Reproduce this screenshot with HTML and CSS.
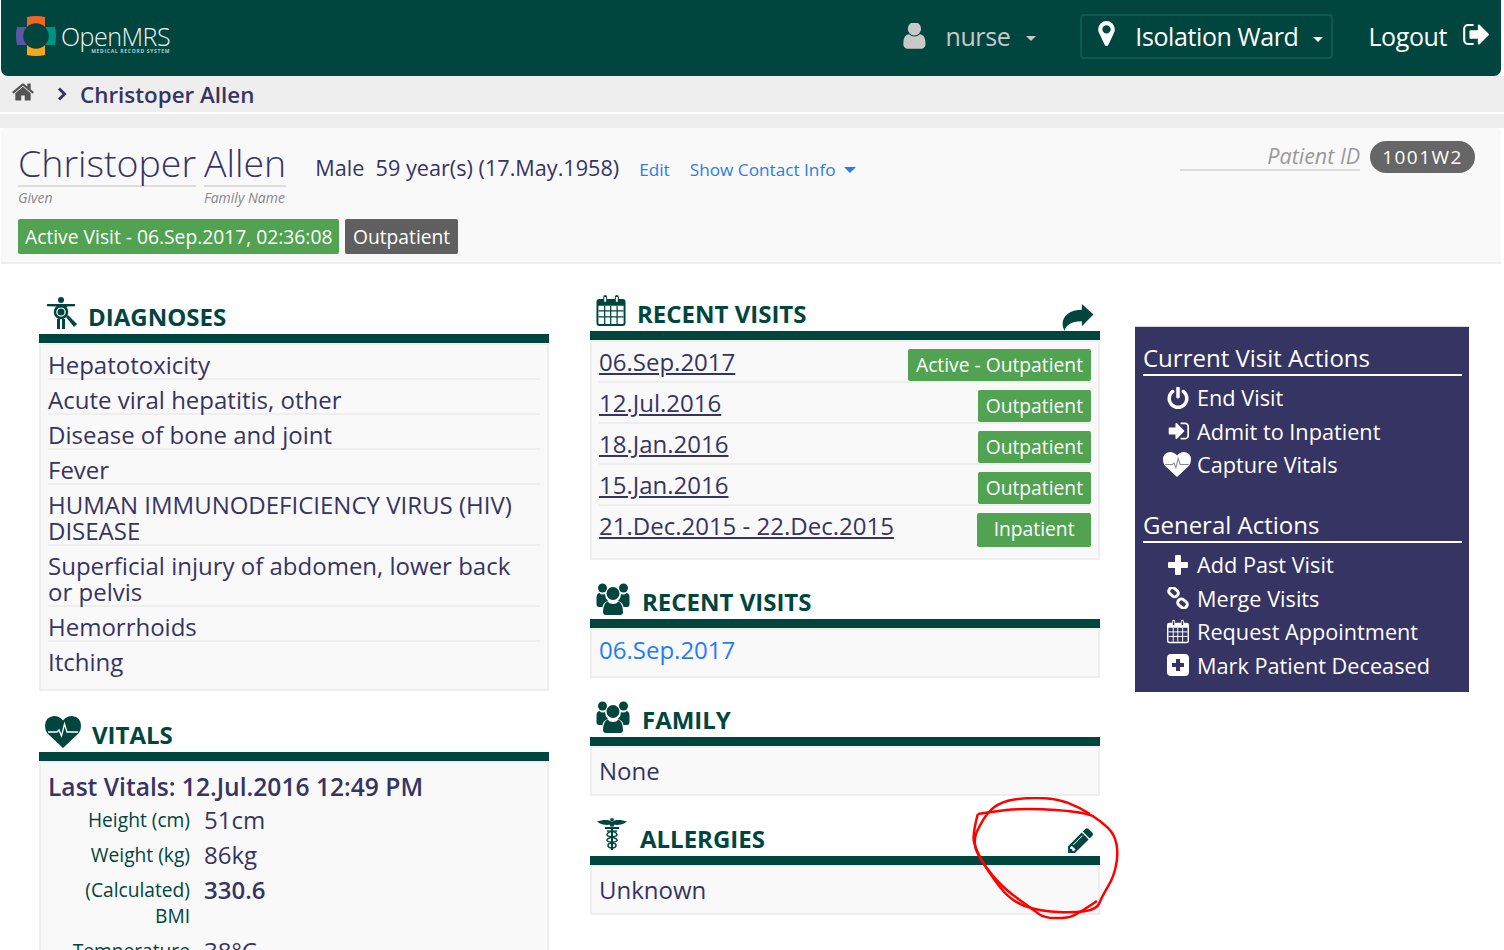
FILE: index.html
```html
<!DOCTYPE html>
<html lang="en">
<head>
<meta charset="UTF-8">
<meta name="viewport" content="width=device-width, initial-scale=1.0">
<title>OpenMRS - Christoper Allen</title>
<link rel="stylesheet" href="styles.css">
</head>
<body>
    <svg class="icon-defs" aria-hidden="true">
        <symbol id="i-calendar" viewBox="0 0 30 32">
            <path fill-rule="evenodd" d="M3 4h4V2a2 2 0 0 1 4 0v2h8V2a2 2 0 0 1 4 0v2h4a3 3 0 0 1 3 3v22a3 3 0 0 1-3 3H3a3 3 0 0 1-3-3V7a3 3 0 0 1 3-3zM2 11v18q0 1 1 1h24q1 0 1-1V11zM8 2v5h2V2zM20 2v5h2V2z"/>
            <path d="M8.500 11v19M14.700 11v19M21.300 11v19M2 16.500h26M2 22.700h26" fill="none" stroke="currentColor" stroke-width="1.300"/>
        </symbol>
        <symbol id="i-users" viewBox="0 0 34 32">
            <circle cx="6.500" cy="5" r="4.500"/>
            <circle cx="27.500" cy="5" r="4.500"/>
            <circle cx="17" cy="10.500" r="6.500"/>
            <path d="M.5 14.500q0-4 3-4.500 1 1.500 3.500 1.500 1 0 2-.5 0 4 3 7-5 1.500-5.500 6H3q-2.500 0-2.500-3zM33.500 14.500q0-4-3-4.500-1 1.500-3.500 1.500-1 0-2-.5 0 4-3 7 5 1.500 5.500 6H31q2.500 0 2.500-3zM7 29q0-8 4.500-10.500 2 2.500 5.500 2.500t5.500-2.500Q27 21 27 29q0 3-3 3H10q-3 0-3-3z"/>
        </symbol>
        <symbol id="i-heart" viewBox="0 0 36 32">
            <path d="M18 32 2.500 17.500Q0 14.500 0 10 0 1 9 0q5.500 0 9 4.500Q21.500 0 27 0q9 1 9 10 0 4.500-2.500 7.500z"/>
            <path d="M3 16h9l2-2 2.500 6 3-12 2.500 8h11" fill="none" stroke="var(--pulse)" stroke-width="1.300"/>
        </symbol>
        <symbol id="i-home" viewBox="0 0 1792 1792">
            <path d="M1472 992v480q0 26-19 45t-45 19h-384v-384h-256v384h-384q-26 0-45-19t-19-45v-480q0-1 .5-3t.5-3l575-474 575 474q1 2 1 6zm223-69l-62 74q-8 9-21 11h-3q-13 0-21-7l-692-577-692 577q-12 8-24 7-13-2-21-11l-62-74q-8-10-7-23.500t11-21.500l719-599q32-26 76-26t76 26l244 204v-195q0-14 9-23t23-9h192q14 0 23 9t9 23v408l219 182q10 8 11 21.500t-7 23.500z"/>
        </symbol>
    </svg>

    <div class="topbar">
        <div class="logo">
            <svg class="logo-mark" viewBox="0 0 40 40">
                <path d="M11 1q9-2 18 0v10a12.700 12.700 0 0 0-18 0z" fill="#f26522"/>
                <path d="M11 1q9-2 18 0v10a12.700 12.700 0 0 0-18 0z" fill="#009384" transform="rotate(90 20 20)"/>
                <path d="M11 1q9-2 18 0v10a12.700 12.700 0 0 0-18 0z" fill="#f8a91b" transform="rotate(180 20 20)"/>
                <path d="M11 1q9-2 18 0v10a12.700 12.700 0 0 0-18 0z" fill="#5b57a6" transform="rotate(270 20 20)"/>
            </svg>
            <div class="logo-text">
                <span class="logo-name">OpenMRS</span>
                <span class="logo-sub">MEDICAL RECORD SYSTEM</span>
            </div>
        </div>
        <div class="nav-user">
            <svg class="nav-icon" viewBox="290 180 1280 1500"><path d="M1536 1399q0 109-62.500 187t-150.500 78h-854q-88 0-150.500-78t-62.500-187q0-85 8.500-160.500t31.500-152 58.500-131 94-89 134.500-34.500q131 128 313 128t313-128q76 0 134.500 34.500t94 89 58.500 131 31.500 152 8.500 160.500zm-256-887q0 159-112.500 271.500t-271.500 112.500-271.500-112.500-112.500-271.500 112.500-271.500 271.500-112.500 271.500 112.500 112.500 271.500z"/></svg>
            <span class="nav-label">nurse</span>
            <span class="caret"></span>
        </div>
        <div class="nav-location">
            <svg class="nav-pin" viewBox="384 128 1024 1536"><path d="M1152 640q0-106-75-181t-181-75-181 75-75 181 75 181 181 75 181-75 75-181zm256 0q0 109-33 179l-364 774q-16 33-47.500 52t-67.500 19-67.500-19-46.500-52l-365-774q-33-70-33-179 0-212 150-362t362-150 362 150 150 362z"/></svg>
            <span class="nav-label">Isolation Ward</span>
            <span class="caret"></span>
        </div>
        <div class="nav-logout">
            <span class="nav-label">Logout</span>
            <svg class="nav-exit" viewBox="0 256 1632 1280"><path d="M704 1440q0 4 1 20t.5 26.500-3 23.500-10 19.500-20.500 6.500h-320q-119 0-203.500-84.500t-84.500-203.500v-704q0-119 84.500-203.500t203.500-84.500h320q13 0 22.500 9.500t9.500 22.500q0 4 1 20t.5 26.500-3 23.500-10 19.500-20.500 6.500h-320q-66 0-113 47t-47 113v704q0 66 47 113t113 47h312l11.500 1 11.500 3 8 5.500 7 9 2 13.500zm928-544q0 26-19 45l-544 544q-19 19-45 19t-45-19-19-45v-288h-448q-26 0-45-19t-19-45v-384q0-26 19-45t45-19h448v-288q0-26 19-45t45-19 45 19l544 544q19 19 19 45z"/></svg>
        </div>
    </div>

    <div class="crumbs">
        <svg class="crumb-home"><use href="#i-home"/></svg>
        <svg class="crumb-sep" viewBox="0 0 10 14"><path d="M2 1.500l5.500 5.500-5.500 5.500" fill="none" stroke="#363463" stroke-width="3"/></svg>
        <span class="crumb-name">Christoper Allen</span>
    </div>
    <div class="crumb-gap"></div>

    <div class="patient">
        <div class="patient-top">
            <div class="name-part">
                <div class="name-value">Christoper</div>
                <div class="name-label">Given</div>
            </div>
            <div class="name-part">
                <div class="name-value">Allen</div>
                <div class="name-label">Family Name</div>
            </div>
            <div class="demographics">Male&nbsp; 59 year(s) (17.May.1958)</div>
            <a class="patient-link">Edit</a>
            <a class="patient-link">Show Contact Info <span class="link-caret"></span></a>
            <div class="patient-id">
                <span class="id-label">Patient ID</span>
                <span class="id-value">1001W2</span>
            </div>
        </div>
        <div class="visit-tags">
            <span class="tag tag-green">Active Visit - 06.Sep.2017, 02:36:08</span>
            <span class="tag tag-grey">Outpatient</span>
        </div>
    </div>

    <div class="dashboard">
        <div class="col col-left">
            <div class="section">
                <div class="section-head">
                    <svg class="head-icon icon-body" viewBox="0 0 30 32">
                        <circle cx="14" cy="3" r="3"/>
                        <path d="M0 7h28v2.200l-8 .3v1h-10v-1l-10-.3z"/>
                        <circle cx="14" cy="15" r="6" fill="none" stroke="currentColor" stroke-width="2.500"/>
                        <circle cx="14" cy="15" r="3.500"/>
                        <path d="M10 22h3v10h-3zM15 22h3v10h-3zM19 20l2-2 9 9-3 3z"/>
                    </svg>
                    <h3>Diagnoses</h3>
                </div>
                <ul class="box diagnosis-list">
                    <li>Hepatotoxicity</li>
                    <li>Acute viral hepatitis, other</li>
                    <li>Disease of bone and joint</li>
                    <li>Fever</li>
                    <li>HUMAN IMMUNODEFICIENCY VIRUS (HIV) DISEASE</li>
                    <li>Superficial injury of abdomen, lower back or pelvis</li>
                    <li>Hemorrhoids</li>
                    <li>Itching</li>
                </ul>
            </div>
            <div class="section">
                <div class="section-head">
                    <svg class="head-icon icon-heart"><use href="#i-heart"/></svg>
                    <h3>Vitals</h3>
                </div>
                <div class="box vitals">
                    <div class="vitals-title">Last Vitals: 12.Jul.2016 12:49 PM</div>
                    <div class="vital-row"><span class="vital-label">Height (cm)</span><span class="vital-value">51cm</span></div>
                    <div class="vital-row"><span class="vital-label">Weight (kg)</span><span class="vital-value">86kg</span></div>
                    <div class="vital-row"><span class="vital-label">(Calculated) BMI</span><span class="vital-value vital-strong">330.6</span></div>
                    <div class="vital-row"><span class="vital-label">Temperature</span><span class="vital-value">38°C</span></div>
                </div>
            </div>
        </div>

        <div class="col col-mid">
            <div class="section">
                <div class="section-head">
                    <svg class="head-icon icon-cal"><use href="#i-calendar"/></svg>
                    <h3>Recent Visits</h3>
                    <svg class="head-action icon-share" viewBox="0 0 32 28"><path d="M32 11 20 0v6C8 6 0 12 0 21q0 3 2 7 1-5 5-7 4-3 13-3v5z"/></svg>
                </div>
                <div class="box visit-list">
                    <div class="visit-row"><a class="visit-date">06.Sep.2017</a><span class="tag tag-green">Active - Outpatient</span></div>
                    <div class="visit-row"><a class="visit-date">12.Jul.2016</a><span class="tag tag-green">Outpatient</span></div>
                    <div class="visit-row"><a class="visit-date">18.Jan.2016</a><span class="tag tag-green">Outpatient</span></div>
                    <div class="visit-row"><a class="visit-date">15.Jan.2016</a><span class="tag tag-green">Outpatient</span></div>
                    <div class="visit-row"><a class="visit-date">21.Dec.2015 - 22.Dec.2015</a><span class="tag tag-green tag-wide">Inpatient</span></div>
                </div>
            </div>
            <div class="section">
                <div class="section-head">
                    <svg class="head-icon icon-users"><use href="#i-users"/></svg>
                    <h3>Recent Visits</h3>
                </div>
                <div class="box box-single box-date"><a class="blue-link">06.Sep.2017</a></div>
            </div>
            <div class="section">
                <div class="section-head">
                    <svg class="head-icon icon-users"><use href="#i-users"/></svg>
                    <h3>Family</h3>
                </div>
                <div class="box box-single">None</div>
            </div>
            <div class="section section-allergies">
                <div class="section-head">
                    <svg class="head-icon icon-staff" viewBox="0 0 30 32">
                        <circle cx="15" cy="1.800" r="1.800"/>
                        <path d="M15 4C12 1 5 2 0 3.500c2 1.500 4 2.500 6 3 2 .5 5 .5 7 .3V8.500h4V6.800c2 .2 5 .2 7-.3 2-.5 4-1.500 6-3C25 2 18 1 15 4z"/>
                        <path d="M8 9h14v2H8zM14 11h2v21h-2z"/>
                        <path d="M10 13c8 0 10 2 10 4s-10 2-10 5 9 2 9 5-4 3-4 3M20 13c-8 0-10 2-10 4s10 2 10 5-9 2-9 5 4 3 4 3" fill="none" stroke="currentColor" stroke-width="1.500"/>
                    </svg>
                    <h3>Allergies</h3>
                    <svg class="head-action icon-pencil" viewBox="0 128 1644 1536"><path d="M491 1536l91-91-235-235-91 91v107h128v128h107zm523-928q0-22-22-22-10 0-17 7l-542 542q-7 7-7 17 0 22 22 22 10 0 17-7l542-542q7-7 7-17zm-54-192l416 416-832 832h-416v-416zm683 96q0 53-37 90l-166 166-416-416 166-165q36-38 90-38 53 0 91 38l235 234q37 39 37 91z"/></svg>
                </div>
                <div class="box box-single">Unknown</div>
            </div>
        </div>

        <div class="actions">
            <h4>Current Visit Actions</h4>
            <ul>
                <li><svg class="action-icon" viewBox="128 64 1536 1600"><path d="M1664 896q0 156-61 298t-164 245-245 164-298 61-298-61-245-164-164-245-61-298q0-182 80.500-343t226.500-270q43-32 95.500-25t83.500 50q32 42 24.500 94.500t-49.500 84.500q-98 74-151.500 181t-53.500 228q0 104 40.500 198.500t109.500 163.500 163.500 109.500 198.500 40.500 198.500-40.500 163.500-109.500 109.500-163.500 40.500-198.500q0-121-53.500-228t-151.500-181q-42-32-49.500-84.500t24.500-94.500q31-43 84-50t95 25q146 109 226.500 270t80.500 343zm-640-768v640q0 52-38 90t-90 38-90-38-38-90v-640q0-52 38-90t90-38 90 38 38 90z"/></svg>End Visit</li>
                <li><svg class="action-icon" viewBox="0 256 1664 1280"><path d="M1312 896q0 26-19 45l-544 544q-19 19-45 19t-45-19-19-45v-288h-448q-26 0-45-19t-19-45v-384q0-26 19-45t45-19h448v-288q0-26 19-45t45-19 45 19l544 544q19 19 19 45zm352-352v704q0 119-84.500 203.500t-203.500 84.500h-320q-13 0-22.500-9.500t-9.500-22.500q0-4-1-20t-.5-26.500 3-23.500 10-19.500 20.500-6.500h320q66 0 113-47t47-113v-704q0-66-47-113t-113-47h-312l-11.500-1-11.500-3-8-5.500-7-9-2-13.500q0-4-1-20t-.5-26.500 3-23.500 10-19.500 20.500-6.500h320q119 0 203.500 84.500t84.500 203.500z"/></svg>Admit to Inpatient</li>
                <li><svg class="action-icon action-heart"><use href="#i-heart"/></svg>Capture Vitals</li>
            </ul>
            <h4 class="actions-second">General Actions</h4>
            <ul>
                <li><svg class="action-icon action-plus" viewBox="0 0 20 20"><path d="M7 1q0-1 1-1h4q1 0 1 1v6h6q1 0 1 1v4q0 1-1 1h-6v6q0 1-1 1H8q-1 0-1-1v-6H1q-1 0-1-1V8q0-1 1-1h6z"/></svg>Add Past Visit</li>
                <li><svg class="action-icon" viewBox="0 0 22 22"><g fill="none" stroke="currentColor" stroke-width="3"><rect x="1.500" y="1.700" width="10" height="7" rx="3.200" transform="rotate(40 6.500 5.200)"/><rect x="10.500" y="13" width="10" height="7" rx="3.200" transform="rotate(40 15.500 16.500)"/></g></svg>Merge Visits</li>
                <li><svg class="action-icon action-cal"><use href="#i-calendar"/></svg>Request Appointment</li>
                <li><svg class="action-icon" viewBox="0 0 22 22"><path fill-rule="evenodd" d="M4 0h14a4 4 0 0 1 4 4v14a4 4 0 0 1-4 4H4a4 4 0 0 1-4-4V4a4 4 0 0 1 4-4zM9 5v4H5v4h4v4h4v-4h4V9h-4V5z"/></svg>Mark Patient Deceased</li>
            </ul>
        </div>
    </div>

    <svg class="scribble" viewBox="0 0 1568 390" preserveAspectRatio="none">
        <path d="M1115 50Q1140 45 1195 38Q1250 32 1335 38Q1420 45 1440 57Q1460 70 1480 90Q1500 110 1505 140Q1510 170 1503 202Q1497 235 1481 262Q1465 290 1457 310Q1450 330 1415 335Q1380 340 1340 337Q1300 335 1270 327Q1240 320 1215 302Q1190 285 1160 240Q1130 195 1119 172Q1108 150 1104 130Q1100 110 1115 50"/>
        <path d="M1450 305Q1400 340 1385 347Q1370 355 1335 355Q1300 355 1285 342Q1270 330 1230 300Q1190 270 1165 240Q1140 210 1125 185Q1110 160 1107 140Q1105 120 1112 102Q1120 85 1130 67Q1140 50 1155 35Q1170 20 1200 11Q1230 3 1280 3Q1330 3 1365 16Q1400 30 1430 50"/>
    </svg>
</body>
</html>
```

FILE: styles.css
```css
* {
    box-sizing: border-box;
}
html, body {
    height: 950px;
    overflow: hidden;
}
body {
    margin: 0;
    position: relative;
    font-family: "Open Sans", Arial, sans-serif;
    background: #fff;
    color: #363463;
}
ul {
    list-style: none;
    margin: 0;
    padding: 0;
}
svg {
    fill: currentColor;
    flex: none;
}
.icon-defs {
    display: none;
}

/* top bar */
.topbar {
    display: flex;
    align-items: center;
    height: 76px;
    margin: 0 3px 0 1px;
    padding: 0 12px 4px 15px;
    background: #00463f;
    border-radius: 0 0 7px 7px;
    color: #fff;
}
.logo {
    display: flex;
    align-items: center;
    gap: 5px;
    margin-right: auto;
}
.logo-mark {
    width: 40px;
    height: 40px;
}
.logo-text {
    display: flex;
    flex-direction: column;
    margin-top: 6px;
    color: #eef4f2;
}
.logo-name {
    font-size: 25px;
    line-height: 24px;
    font-weight: 300;
    letter-spacing: -0.5px;
}
.logo-sub {
    align-self: flex-end;
    font-size: 5px;
    line-height: 6px;
    font-weight: 700;
    letter-spacing: 0.7px;
    color: #b9cbc7;
}
.nav-label {
    font-size: 25px;
    line-height: 30px;
    letter-spacing: -0.4px;
}
.caret {
    width: 0;
    height: 0;
    border: 5px solid transparent;
    border-top: 5px solid currentColor;
    border-bottom: 0;
}
.nav-user {
    display: flex;
    align-items: center;
    color: #c9c9c9;
}
.nav-icon {
    width: 24px;
    height: 26px;
    margin-right: 18px;
}
.nav-user .caret {
    margin-left: 16px;
    margin-top: 4px;
}
.nav-location {
    display: flex;
    align-items: center;
    height: 45px;
    margin-left: 44px;
    padding: 0 8px 0 16px;
    border: 2px solid #0a5a50;
    border-radius: 4px;
}
.nav-pin {
    width: 17px;
    height: 25px;
    margin-right: 20px;
    margin-top: -5px;
}
.nav-location .caret {
    margin-left: 15px;
    margin-top: 6px;
}
.nav-logout {
    display: flex;
    align-items: center;
    margin-left: 35px;
}
.nav-exit {
    width: 27px;
    height: 21px;
    margin-left: 15px;
    margin-top: -4px;
}

/* breadcrumb */
.crumbs {
    display: flex;
    align-items: center;
    height: 36px;
    padding-left: 11px;
    background: #eee;
}
.crumb-home {
    width: 24px;
    height: 24px;
    color: #555;
    margin-top: -4px;
}
.crumb-sep {
    width: 10px;
    height: 14px;
    margin-left: 22px;
}
.crumb-name {
    margin-left: 13px;
    font-size: 22.400px;
    font-weight: 600;
}
.crumb-gap {
    height: 16px;
    border-top: 2px solid #fff;
    background: #eee;
}

/* patient header */
.patient {
    height: 136px;
    margin: 0 3px 0 1px;
    padding: 13px 17px 0;
    background: #f9f9f9;
    border-bottom: 2px solid #eee;
    border-radius: 5px 5px 0 0;
}
.patient-top {
    display: flex;
    align-items: flex-start;
}
.name-part {
    margin-right: 8px;
}
.name-value {
    height: 46px;
    font-size: 37.500px;
    line-height: 44px;
    font-weight: 300;
    border-bottom: 2px solid #ddd;
}
.name-label {
    margin-top: 2px;
    font-size: 14px;
    line-height: 18px;
    font-style: italic;
    color: #888;
}
.demographics {
    margin-left: 21px;
    margin-top: 11px;
    font-size: 21.650px;
    line-height: 32px;
}
.patient-link {
    margin-left: 20px;
    margin-top: 17px;
    font-size: 17.200px;
    line-height: 24px;
    color: #2b7de9;
}
.link-caret {
    display: inline-block;
    vertical-align: 3px;
    margin-left: 4px;
    border: 6px solid transparent;
    border-top: 6px solid #2b7de9;
    border-bottom: 0;
}
.patient-id {
    display: flex;
    align-items: flex-start;
    margin-left: auto;
    margin-right: 9px;
}
.id-label {
    width: 180px;
    height: 30px;
    text-align: right;
    font-size: 21.500px;
    line-height: 30px;
    font-style: italic;
    color: #999;
    border-bottom: 2px solid #ddd;
}
.id-value {
    margin-left: 10px;
    padding: 0 12px;
    height: 32px;
    font-size: 19px;
    line-height: 32px;
    letter-spacing: 1.500px;
    color: #fff;
    background: #666;
    border-radius: 16px;
}
.visit-tags {
    display: flex;
    gap: 6px;
    margin-top: 12px;
}
.tag {
    display: inline-block;
    padding: 0 8px;
    font-size: 19.250px;
    line-height: 32px;
    color: #fff;
    border-radius: 2px;
}
.visit-tags .tag {
    padding: 0 7.500px;
    line-height: 35px;
}
.visit-tags .tag-green {
    padding: 0 7px;
}
.tag-green {
    background: #51a351;
}
.tag-grey {
    background: #5f5f5f;
}
.tag-wide {
    padding: 0 16.500px;
}

/* dashboard columns */
.dashboard {
    display: flex;
    align-items: flex-start;
    height: 686px;
    overflow: hidden;
    padding: 19px 0 0 39px;
}
.col {
    flex: none;
    width: 510px;
}
.col-left {
    margin-top: 3px;
}
.col-left .section {
    margin-bottom: 13px;
}
.col-mid {
    margin-left: 41px;
}
.section {
    margin-bottom: 11px;
}
.section-allergies {
    margin-top: 12px;
}
.section-head {
    display: flex;
    align-items: flex-end;
    height: 48px;
    padding-bottom: 2px;
    color: #00463f;
}
h3 {
    margin: 0;
    font-size: 24px;
    line-height: 30px;
    font-weight: 700;
    text-transform: uppercase;
    color: #00463f;
}
.icon-body {
    width: 30px;
    height: 32px;
    margin: 0 11px 3px 8px;
}
.icon-heart {
    --pulse: #fff;
    width: 36px;
    height: 34px;
    margin: 0 11px 1px 6px;
}
.icon-cal {
    width: 30px;
    height: 31px;
    margin: 0 11px 3px 6px;
}
.icon-users {
    width: 34px;
    height: 32px;
    margin: 0 12px 2px 6px;
}
.icon-staff {
    width: 30px;
    height: 32px;
    margin: 0 13px 4px 7px;
}
.head-action {
    margin-left: auto;
}
.icon-share {
    width: 32px;
    height: 27px;
    margin-right: 6px;
    margin-bottom: -2px;
}
.icon-pencil {
    width: 27px;
    height: 27px;
    margin-right: 7px;
}
.box {
    border: 2px solid #eee;
    border-top: 11px solid;
    border-image: linear-gradient(#00463f 9px, #eee 9px) 11 2 2;
    background: #f9f9f9;
}
.diagnosis-list {
    padding: 0 7px 14px 7px;
}
.diagnosis-list li {
    padding: 7px 20px 0 0;
    font-size: 24px;
    line-height: 26px;
    border-bottom: 2px solid #eee;
}
.diagnosis-list li:last-child {
    border-bottom: 0;
}

/* vitals */
.vitals {
    padding: 7px 7px;
}
.vitals-title {
    margin-bottom: 4px;
    font-size: 24.600px;
    line-height: 33px;
    font-weight: 600;
}
.vital-row {
    display: grid;
    grid-template-columns: 142px 1fr;
    column-gap: 14px;
    margin-bottom: 9px;
}
.vital-label {
    text-align: right;
    font-size: 19.200px;
    line-height: 26px;
    color: #00463f;
}
.vital-value {
    font-size: 24px;
    line-height: 26px;
}
.vital-strong {
    font-weight: 600;
}

/* visit list */
.visit-list {
    padding: 0 7px 11px;
}
.visit-row {
    display: flex;
    justify-content: space-between;
    height: 41px;
    padding-top: 7px;
    border-bottom: 2px solid #eee;
}
.visit-row:last-child {
    border-bottom: 0;
}
.visit-date {
    font-size: 24px;
    line-height: 26px;
    text-decoration: underline;
}
.box-single {
    height: 59px;
    padding: 0 7px;
    font-size: 24px;
    line-height: 45px;
}
.box-date {
    line-height: 39px;
}
.blue-link {
    color: #1f7cff;
}

/* actions panel */
.actions {
    flex: none;
    width: 334px;
    height: 366px;
    margin: 43px 0 0 35px;
    padding: 14px 7px 0 8px;
    background: #363463;
    border-top: 1px solid #d8d8d8;
    color: #fff;
}
.actions h4 {
    margin: 0;
    font-size: 24px;
    line-height: 33px;
    font-weight: 400;
    border-bottom: 2px solid #fff;
}
.actions ul {
    padding-top: 5px;
}
.actions li {
    display: flex;
    align-items: center;
    height: 33.600px;
    font-size: 21.700px;
}
.actions .actions-second {
    margin-top: 26px;
}
.action-icon {
    width: 22px;
    height: 22px;
    margin: 0 8px 0 24px;
}
.action-heart {
    --pulse: #888;
    width: 28px;
    height: 27px;
    margin: 0 6px 0 20px;
}
.action-plus {
    width: 20px;
    height: 20px;
    margin: 0 9px 0 25px;
}
.action-cal {
    height: 25px;
}

/* hand drawn circle over the allergies pencil */
.scribble {
    position: absolute;
    left: 581px;
    top: 797px;
    width: 558px;
    height: 133px;
    fill: none;
    stroke: #f00;
    stroke-width: 2.500px;
    pointer-events: none;
}
.scribble path {
    vector-effect: non-scaling-stroke;
}
```
